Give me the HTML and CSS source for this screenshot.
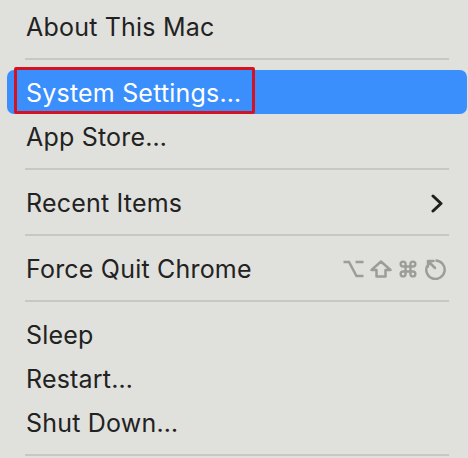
FILE: index.html
```html
<!DOCTYPE html>
<html lang="en">
<head>
<meta charset="utf-8">
<link rel="stylesheet" href="styles.css">
</head>
<body>
<div class="menu">
  <div class="item"><span class="label">About This Mac</span></div>
  <div class="sep"></div>
  <div class="item active"><span class="label">System Settings…</span><span class="annot"></span></div>
  <div class="item"><span class="label">App Store…</span></div>
  <div class="sep"></div>
  <div class="item">
    <span class="label">Recent Items</span>
    <svg class="chev" width="12" height="19" viewBox="0 0 12 19"><polyline points="2,2 10,9.5 2,17" fill="none" stroke="#1f1f1f" stroke-width="3" stroke-linecap="round" stroke-linejoin="round"/></svg>
  </div>
  <div class="sep"></div>
  <div class="item">
    <span class="label">Force Quit Chrome</span>
    <span class="keys">
      <svg width="21" height="18" viewBox="0 0 21 18"><path d="M0.5 2 H6 L13.5 16 H20.5 M12.5 2 H20.5" fill="none" stroke="#9c9c99" stroke-width="2.5"/></svg>
      <svg width="22" height="18" viewBox="0 0 22 18"><path d="M11 1.5 L20.5 10 H15.5 V16.5 H6.5 V10 H1.5 Z" fill="none" stroke="#9c9c99" stroke-width="2.5" stroke-linejoin="round"/></svg>
      <svg width="20" height="18" viewBox="0 0 24 22"><path d="M15 5v12a3 3 0 1 0 3-3H6a3 3 0 1 0 3 3V5a3 3 0 1 0-3 3h12a3 3 0 1 0-3-3" fill="none" stroke="#9c9c99" stroke-width="2.9"/></svg>
      <svg width="23" height="21" viewBox="0 0 23 21"><path d="M11.5 1.5 A9.2 9.2 0 1 1 3.3 6.5" fill="none" stroke="#9c9c99" stroke-width="2.5"/><path d="M4 2 L11 9 M4 2 H9.5 M4 2 V7.5" fill="none" stroke="#9c9c99" stroke-width="2.5" stroke-linecap="round"/></svg>
    </span>
  </div>
  <div class="sep"></div>
  <div class="item"><span class="label">Sleep</span></div>
  <div class="item"><span class="label">Restart…</span></div>
  <div class="item"><span class="label">Shut Down…</span></div>
  <div class="sep"></div>
</div>
</body>
</html>
```
FILE: styles.css
```css
html, body {
  margin: 0;
  padding: 0;
  background: #e0e0dc;
}
body {
  width: 468px;
  height: 458px;
  overflow: hidden;
  font-family: Inter, "Noto Sans", sans-serif;
  color: #222222;
}
.menu {
  display: flex;
  flex-direction: column;
  padding: 4px 1px 0 7px;
}
.item {
  position: relative;
  height: 44px;
  display: flex;
  align-items: center;
  justify-content: space-between;
  padding: 2px 0 0 19px;
  box-sizing: border-box;
  border-radius: 7px;
}
.label {
  font-size: 25px;
  letter-spacing: 0.2px;
  line-height: 1;
}
.active {
  background: #3b8ffc;
  color: #ffffff;
}
.annot {
  position: absolute;
  left: 7px;
  top: -3px;
  width: 241px;
  height: 47px;
  box-sizing: border-box;
  border: 3px solid #d5121f;
  border-radius: 2px;
}
.sep {
  height: 22px;
  display: flex;
  align-items: center;
  margin: 0 18px 0 18px;
}
.sep::before {
  content: "";
  flex: 1;
  height: 2px;
  background: #c7c7c3;
}
.chev {
  margin-right: 24px;
}
.keys {
  display: flex;
  align-items: center;
  gap: 6px;
  margin-right: 20px;
}
```
